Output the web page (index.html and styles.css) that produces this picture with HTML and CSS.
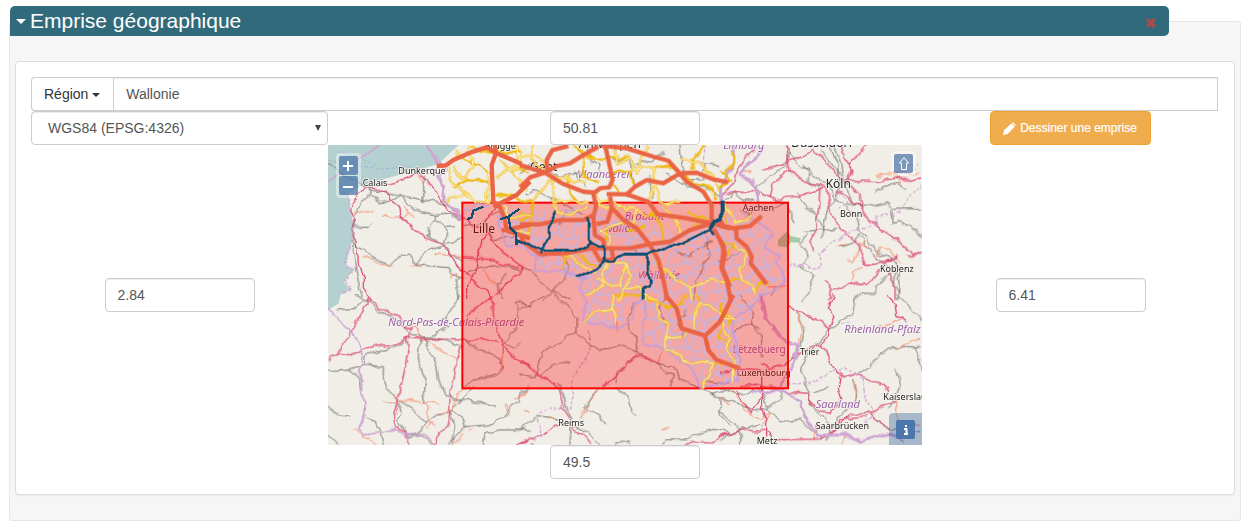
FILE: index.html
```html
<!DOCTYPE html>
<html lang="fr">
<head>
<meta charset="utf-8">
<title>Emprise géographique</title>
<link rel="stylesheet" href="styles.css">
</head>
<body>
<section class="well">
  <header class="legend">
    <button class="toggle" type="button"><span class="caret"></span>Emprise géographique</button>
    <button class="remove" type="button" aria-label="Supprimer">
      <svg viewBox="0 0 12 12" aria-hidden="true"><path d="M3.2 1 6 3.8 8.8 1 11 3.2 8.2 6 11 8.8 8.800 11 6 8.200 3.200 11 1 8.800 3.800 6 1 3.200Z"/></svg>
    </button>
  </header>
  <div class="card">
    <div class="input-group">
      <button class="region" type="button">Région <span class="caret"></span></button>
      <input class="field region-name" type="text" value="Wallonie" aria-label="Région">
    </div>
    <div class="extent">
      <div class="select-wrap">
        <select class="field projection" aria-label="Projection"><option>WGS84 (EPSG:4326)</option></select>
        <svg class="arrow" viewBox="0 0 6 6" aria-hidden="true"><path d="M0 0H6L3 6Z"/></svg>
      </div>
      <input class="field coord" type="text" value="50.81" aria-label="Nord">
      <button class="draw" type="button">
        <svg viewBox="0 0 14 14" aria-hidden="true"><path d="M0 14 1 9 9 1.500 12.500 5 5 13ZM9.700 1Q10.600 0 11.600 1L13 2.400Q14 3.400 13 4.300L12.800 4.500 9.400 1.200Z"/></svg>
        Dessiner une emprise
      </button>
      <input class="field coord" type="text" value="2.84" aria-label="Ouest">
      <div class="map">
        <svg class="tiles" viewBox="0 0 1782 900" preserveAspectRatio="xMidYMid slice" role="img" aria-label="Carte">
          <defs>
            <filter id="winding" filterUnits="userSpaceOnUse" x="0" y="0" width="1782" height="900" color-interpolation-filters="sRGB">
              <feTurbulence type="fractalNoise" baseFrequency="0.03" numOctaves="2" seed="4" result="noise"/>
              <feDisplacementMap in="SourceGraphic" in2="noise" scale="22" xChannelSelector="R" yChannelSelector="G"/>
            </filter>
            <pattern id="communes" width="96" height="84" patternUnits="userSpaceOnUse">
              <path class="commune" d="M0 20 12 14 20 22 34 16 40 4 38 0M34 16 42 30 36 44 22 50 16 62 4 60 0 66M42 30 56 34 64 24 80 28 86 18 96 20M64 24 60 10 66 0M36 44 50 56 48 70 38 84M50 56 66 54 72 44 80 28M66 54 76 66 70 76 66 84M76 66 90 62 96 66M16 62 22 74 14 84M14 0 20 8 20 22M84 84 86 74 90 62"/>
            </pattern>
          </defs>
          <rect class="land" width="1782" height="900"/>
          <path class="sea" d="M0 0H392L330 58 220 88 105 120 62 145 66 195 78 245 72 285 62 325 52 362 78 372 60 395 46 415 72 432 38 448 32 476 0 494Z"/>
          <path class="green" d="M1350 285 1378 258 1388 273 1418 280 1416 293 1390 292 1376 307 1350 304Z"/>

          <g filter="url(#winding)">
          <g class="rail">
            <g transform="translate(-24 -15)">
              <path d="M24 70 60 95 130 140 150 145 143 172 122 185 115 208 97 225 105 280 100 330 110 400 118 445 130 480M150 150 200 158 245 165 262 195 285 210 350 225 390 222 424 240M310 105 312 187M352 225 325 258 327 290 355 305 380 310 425 297M150 165 180 185 210 180 255 170 305 178 345 187 385 195 420 215M95 305 150 345 180 362 205 376 240 350 265 342 280 355 290 373 315 335 380 315 390 345 426 362M290 373 340 379 388 383 394 400 425 410M372 262 410 260M98 245 120 262 140 262 156 250M430 410 408 418 415 440 415 480M345 228 380 280 374 310"/>
              <path d="M440 400 500 380 545 375 600 392M560 400 532 440 545 480M505 280 520 300 560 290 600 288M430 260 490 248 510 225 550 215"/>
            </g>
            <g transform="translate(576 -15)">
              <path d="M0 95 30 75 70 85 120 110 200 92M200 15 210 60 235 70 240 100M280 60 330 55 350 70 400 60 430 40M330 60 340 130 325 170M480 15 485 70 500 120 550 118 555 70 600 80M440 100 500 140 560 145 600 170M10 165 50 150 80 170 120 185M120 185 160 210 190 225M160 95 200 140M390 110 395 180"/>
              <path d="M0 380 40 395 60 425 95 455 130 425 150 380 120 330 60 350M95 455 70 480M95 455 150 480M330 325 375 345M380 360 390 400M560 290 565 350 530 420 520 480M140 210 120 250M460 330 500 350 580 300"/>
            </g>
            <g transform="translate(1176 -15)">
              <path d="M110 180 115 140 150 105 195 80 210 40 200 15M210 40 240 80 270 90 300 125 340 150 345 180 325 200 312 250 310 292M325 15 350 60 360 120 350 180 385 210 410 235 420 270 450 310 480 345 520 355 530 370 540 450 535 480M340 15 365 70 375 140 400 190 430 205M300 30 340 80 365 105M250 75 270 100 260 120 300 140M375 195 450 200 505 185 520 208 605 205M515 210 520 250 545 245 605 290M15 180 50 155 65 180 100 180M230 155 250 200 290 225 310 260M205 205 222 225 222 250M255 275 300 268 350 265M265 280 240 310 265 350 240 375 280 410 275 440 245 480M355 320 400 310 420 280M420 290 465 350 500 375 525 395 520 430 540 460 530 480M410 475 430 460 465 460 485 420 520 395M470 150 530 130 560 150"/>
              <path d="M170 440 150 470M60 330 30 360 0 365M115 190 95 220 60 210M150 205 200 190"/>
            </g>
            <g transform="translate(-24 450)">
              <path d="M105 0 140 15 180 50 220 65 265 110 300 125 350 130 420 150M50 45 105 40 135 15M300 130 340 120 380 95 382 60 412 15 415 0M310 130 330 165 350 210 355 250 375 305 420 315 480 320 530 335M300 130 300 160 290 205 317 250 310 325M265 130 230 155 160 170 140 180 135 210 85 222 24 228M130 210 190 215 190 250 200 280 235 315 240 350 232 370 270 430 M240 315 280 350 320 380 310 405 270 430M320 380 350 360 390 350 430 310 460 275M390 350 400 390 400 450M395 350 430 370 435 395 385 450M435 395 500 390 530 380 560 360 570 335 600 320 605 290 630 280M490 450 495 415 540 405 630 405M24 335 60 360 90 364M24 418 55 450M135 370 170 380 190 450M265 420 300 420 340 450M85 222 120 250 125 285"/>
              <path d="M425 135 490 170 540 190 550 215 535 240 460 255 430 275M545 190 550 140 590 100 595 40 580 20 630 30M550 140 580 165 605 140"/>
            </g>
            <g transform="translate(576 450)">
              <path d="M0 410 25 380 50 365 90 370 115 375 150 385 200 410 240 450M110 260 130 300 140 340 155 370 150 450M290 280 325 295 335 350 348 362M195 340 240 360 257 388M230 285 190 340M545 280 600 310 600 360 630 390M570 300 630 285M430 450 440 430 500 435 520 420 580 403 630 410M285 450 290 440 330 445"/>
              <path d="M0 40 75 0M100 0 150 40 168 70 168 110 210 150 240 165 300 153 345 170 410 205 440 235 460 240 458 275M168 110 120 145 90 155 60 190 45 245 0 240M60 240 100 210 120 200 150 198M345 170 355 130 325 100 325 70 345 25M345 180 290 235 285 270M410 205 465 215 480 250 515 270 540 270M490 125 480 80 500 40M630 260 590 262 560 255M440 0 420 40 440 110"/>
            </g>
            <g transform="translate(1176 450)">
              <path d="M410 0 400 60 345 90 325 100 300 140 270 165 250 195 245 230 260 260 265 310 290 350 330 390M530 0 545 10 570 40 605 80M420 235 450 215 480 180 520 155 605 155M585 155 600 200 605 230M525 220 540 270 520 320 500 345M400 250 410 290 400 330 370 350 330 400 325 440M150 285 180 290 190 310 140 335 125 290 100 270M135 340 180 380 240 375 290 420M0 310 60 330 105 345 140 340M0 350 60 400 60 450M0 280 50 300 100 290M470 380 500 400 605 410M280 295 325 275M0 440 40 410 120 390M230 50 250 100 240 160 220 190"/>
              <path d="M60 0 100 50 95 90 125 120 125 190M40 110 80 85 120 100"/>
            </g>
          </g>

          <g class="minor">
            <g transform="translate(-24 -15)"><path d="M95 219 125 215 160 215M190 228 250 230 265 212 282 228M250 203 268 215M128 350 160 358 180 372 218 378M278 376 310 380M345 341 425 352M392 415 395 400 410 395 410 410M290 105 310 130M490 390 510 415 530 440"/></g>
            <g transform="translate(1176 -15)"><path d="M470 110 530 100 600 100M520 95 540 135M60 95 95 100M430 305 400 370 380 355M430 380 400 400 400 430M140 440 200 440M545 370 520 345 480 320 470 355M350 320 375 310M430 310 455 330"/></g>
            <g transform="translate(-24 450)"><path d="M265 95 290 98 300 125 410 192M190 315 200 328 230 322M220 298 240 315 300 320 355 328M315 325 325 370 345 395M325 400 335 380M105 400 135 425 170 450M360 355 400 345 420 290 450 275M548 140 545 220M580 315 610 300 630 270M555 330 565 355M445 410 455 400M400 450 430 415M610 350 630 348"/></g>
            <g transform="translate(576 450)"><path d="M240 275 205 325 180 370M0 300 20 290M290 80 290 105M410 205 425 170M10 350 30 350M85 365 105 375M425 405 450 400"/></g>
            <g transform="translate(1176 450)"><path d="M230 55 245 90 235 150M475 95 520 80 550 70M535 158 570 140 605 130M405 260 405 310M30 280 65 320 75 350 120 370 150 350 125 400M530 320 530 380 600 390M375 420 370 450M0 310 30 330M280 410 285 435"/></g>
          </g>

          <g class="trunk">
            <g transform="translate(-24 -15)"><path d="M145 138 120 160 100 195 92 222 103 245 100 280 112 310 115 370 130 410 130 440 155 480M150 140 180 150 205 165 215 185 235 205 240 225 280 265 325 296 375 315 390 345 415 382 435 395 470 430 500 450 510 475M155 138 185 128 210 133 250 122 260 110 290 103 320 122 350 160 380 210 425 235 450 255 490 262M500 280 470 340 465 400 440 430 440 480M430 350 510 355 545 370 600 385M500 280 540 330 605 380 610 390 560 430 505 480M490 260 510 220 530 200"/></g>
            <g transform="translate(1176 -15)"><path d="M0 170 40 130 50 90 80 50 110 20M20 160 105 155 170 180 250 165 310 145M130 90 190 70 205 60 260 45 275 25 330 80 365 120 470 125 520 115 605 118M205 60 210 90 240 120 300 135 330 160 325 200 350 250 380 285 420 315 435 370M150 175 160 130 210 90M390 100 390 70 440 15M375 120 420 165 430 220 470 260 530 300 580 340 605 342M350 150 400 190 425 200M535 345 500 370 470 400 450 430 390 430 335 455M430 370 480 370 535 350M600 342 560 345M315 420 335 455 325 480M500 395 525 440 525 480M390 80 385 120M300 150 295 210 280 290 270 310 280 335M365 15 380 60 395 90M200 15 205 60"/></g>
            <g transform="translate(-24 450)"><path d="M145 10 140 30 105 90 70 145 55 175 24 195M145 10 180 40 240 65 250 95 275 100 260 135 265 155 255 220 235 310 220 360 225 390 255 410 270 450M55 175 95 180 130 160 190 150 230 150 262 125 300 130 420 135 440 140 480 135 530 135M440 60 510 10M510 0 520 30 520 60 535 110 545 150 580 185 630 215M425 150 410 190 405 240 390 290 388 380 360 410 340 450M590 450 630 436"/></g>
            <g transform="translate(576 450)"><path d="M0 202 30 215 65 250 100 262 120 290 130 340 150 370 160 400 190 420 215 450M0 445 70 420 100 395 140 385M250 280 290 240 345 180 390 190 420 205M495 450 520 440 570 440 630 415"/></g>
            <g transform="translate(1176 450)"><path d="M205 25 240 55 290 70 330 95 345 65 325 35 340 0M495 0 525 30 530 60 560 80M330 95 325 125 300 150 270 155 210 195 195 210 150 220 120 205M300 150 325 180 350 230 370 245 410 235 440 250 485 270 505 290M360 245 355 280 365 310 330 355 300 350 265 310 260 295 205 290 125 270 60 275M0 235 60 220 125 225M125 230 125 340 140 380 140 430M125 300 95 355 50 290M0 425 60 405 150 410 155 435 310 432 340 410 390 360 450 355 500 325 530 320M450 355 470 380 510 400M310 430 350 400 360 375 440 365M310 430 285 410 290 385"/></g>
          </g>

          <g class="frontier">
            <path d="M0 490 40 530 60 548 95 600 105 640 92 680 105 710 95 740 113 770 110 810 92 850 110 870 160 862 205 852 240 870 290 868 320 900"/>
            <path class="thick" d="M296 0 351 75 331 95 351 130 346 165 371 185 401 220M1218 0 1212 60 1180 130 1182 180M1310 10 1255 60 1235 90 1275 110 1290 140 1286 175M1298 450 1310 510 1336 555 1380 590 1410 600 1400 650 1370 700 1360 735 1270 745M1360 735 1420 770 1430 820 1470 870 1560 870 1600 890 1650 875 1690 865 1730 890"/>
            <path class="dashed" d="M1380 365 1430 355 1450 372 1480 370 1475 325 1510 295 1545 270 1600 250 1640 240 1640 215 1710 205 1740 165 1782 120M1380 715 1450 715 1510 680 1545 672 1600 690 1615 770 1640 800 1610 840M1130 0 1120 60M784 560 785 620 760 660 735 700 730 790 670 785 625 810 640 870 610 900M62 145 66 195 78 245 72 285 62 325 52 362 78 372 60 395 46 415 72 432 38 448"/>
          </g>
          </g>
          <path class="frontier" d="M0 110 90 44 156 0"/>
          <path class="ferry" d="M0 45 70 60 160 72 250 65M30 20 90 35 150 65M1540 140 1560 175 1530 190M1770 55 1760 80M1540 535 1570 530"/>

          <g class="labels">
            <text x="211" y="87" class="town">Dunkerque</text>
            <text x="104" y="123" class="town">Calais</text>
            <text x="434" y="264" class="city">Lille</text>
            <text x="470" y="13" class="town">Brugge</text>
            <text x="606" y="78" class="city">Gent</text>
            <text x="752" y="8" class="city">Antwerpen</text>
            <text x="1390" y="7" class="city">Düsseldorf</text>
            <text x="1493" y="130" class="city">Köln</text>
            <text x="1536" y="215" class="town">Bonn</text>
            <text x="1244" y="197" class="town">Aachen</text>
            <text x="1656" y="380" class="town">Koblenz</text>
            <text x="691" y="843" class="town">Reims</text>
            <text x="1226" y="694" class="town">Luxembourg</text>
            <text x="1416" y="631" class="town">Trier</text>
            <text x="1463" y="852" class="town">Saarbrücken</text>
            <text x="1666" y="764" class="town">Kaiserslautern</text>
            <text x="1286" y="898" class="town">Metz</text>
            <text x="748" y="100" class="area">Vlaanderen</text>
            <text x="1186" y="12" class="area">Limburg</text>
            <text x="181" y="542" class="area">Nord-Pas-de-Calais-Picardie</text>
            <text x="890" y="226" class="area">Brabant</text>
            <text x="830" y="260" class="area">wallon</text>
            <text x="930" y="402" class="area">Wallonie</text>
            <text x="1214" y="625" class="area upright">Lëtzebuerg</text>
            <text x="1549" y="565" class="area">Rheinland-Pfalz</text>
            <text x="1463" y="790" class="area">Saarland</text>
          </g>

          <rect class="extent-box" x="403" y="173" width="977" height="557"/>

          <g filter="url(#winding)">
          <path fill="url(#communes)" d="M520 190 600 200 760 185 900 215 1050 260 1150 240 1230 205 1290 240 1330 270 1320 340 1366 375 1360 420 1290 460 1270 510 1216 545 1240 600 1230 710 1120 725 1080 650 1010 610 955 600 945 510 925 450 880 540 770 530 755 400 650 385 610 320 540 300Z"/>
          <path class="commune edge" d="M410 195 435 185 445 175 465 185 480 175M520 190 515 230 535 300 560 305 590 300 612 330 630 330 625 375 660 385 700 372 745 390 770 400 755 430 775 470 760 525 800 535 880 545 915 525 920 480 945 460 955 510 940 545 950 600 1010 610 1060 650 1090 660 1100 690 1120 728 1180 710 1230 705 1235 640 1220 580 1210 530 1240 500 1275 490 1300 450 1345 435 1370 410 1365 380 1345 350 1360 330 1310 310 1335 270 1295 235 1270 215 1240 205"/>

          <g class="road">
            <g transform="translate(-24 -15)"><path d="M405 35 430 50 452 18M385 80 390 118 430 155 470 185M380 183 400 165 435 165 480 188 505 185 515 165M450 45 460 85 430 120 400 80M505 95 503 185M455 20 500 35 560 45 600 30M590 15 598 80 560 90 530 110M598 80 630 95M410 50 470 72 510 100M540 60 580 100 620 150M530 170 570 165 600 180M550 195 570 240 610 222 630 235M580 275 630 280M400 140 440 120 500 125"/></g>
            <g transform="translate(576 -15)"><path d="M0 45 50 50 90 80M40 15 35 60 70 90M95 100 100 185 150 180 200 190M0 180 40 185 35 230 0 240M40 180 100 110 200 130M100 190 110 215 150 225 200 200M160 15 200 50 250 60 330 50M280 15 295 70 330 50 350 100 380 15M270 100 330 95 340 140M330 90 400 80 405 130 380 190M400 80 460 80 520 130M405 130 420 190 480 185M480 60 540 70 570 100 600 150M550 15 520 60 520 90M500 130 570 145 590 180M140 110 150 160 180 190M190 50 190 110 230 130M280 130 300 160M230 155 240 200 280 215 300 190M230 180 270 185 320 210 340 200 380 230 400 215M350 200 345 240 310 250 240 270M240 270 270 290 265 320M265 260 250 310M100 330 160 350 190 380 230 400M140 330 130 390M270 360 320 370 330 410 310 460 290 480M320 370 300 440 230 420M400 350 440 400 510 440 515 480M430 200 480 260 480 285M390 220 430 260 425 310M500 220 560 240M510 440 570 420 630 425M260 370 245 440 200 465M180 340 200 370 240 380M320 270 370 260M520 270 540 240M300 450 360 440 375 480M0 210 30 240 25 300"/></g>
            <g transform="translate(1176 -15)"><path d="M15 100 40 65 35 35M0 140 30 120 5 90M10 190 40 240M40 250 80 240 100 220M5 210 20 250M0 310 40 310 50 330 80 335 75 370 60 380 65 420 100 435 105 465M40 310 20 350M60 420 0 425M105 465 120 430 150 430"/></g>
            <g transform="translate(576 450)"><path d="M280 0 285 85M190 82 225 50 280 45M280 0 370 5M370 0 410 20 415 60 440 90 440 165M375 10 440 35 470 30 500 0M440 165 480 180 490 200 580 205M440 130 490 125 520 100 525 50 545 25 630 65M545 25 530 0M580 205 545 280M580 205 630 205M610 20 600 130 630 150M620 50 630 90"/></g>
            <g transform="translate(1176 450)"><path d="M45 75 10 70 10 105 25 125 20 160 40 200 40 260"/></g>
          </g>
          <g class="road-core">
            <g transform="translate(-24 -15)"><path d="M405 35 430 50 452 18M385 80 390 118 430 155 470 185M380 183 400 165 435 165 480 188 505 185 515 165M450 45 460 85 430 120 400 80M505 95 503 185M590 15 598 80 560 90 530 110M540 60 580 100 620 150M550 195 570 240 610 222 630 235M580 275 630 280"/></g>
            <g transform="translate(576 -15)"><path d="M0 45 50 50 90 80M40 15 35 60 70 90M95 100 100 185 150 180 200 190M40 180 100 110 200 130M100 190 110 215 150 225 200 200M280 15 295 70 330 50 350 100 380 15M330 90 400 80 405 130 380 190M405 130 420 190 480 185M480 60 540 70 570 100 600 150M230 155 240 200 280 215 300 190M230 180 270 185 320 210 340 200 380 230M350 200 345 240 310 250 240 270 270 290 265 320M100 330 160 350 190 380 230 400M270 360 320 370 330 410 310 460 290 480M320 370 300 440 230 420M400 350 440 400 510 440 515 480M510 440 570 420 630 425M260 370 245 440 200 465M430 200 480 260 480 285M300 450 360 440 375 480"/></g>
            <g transform="translate(1176 -15)"><path d="M10 190 40 240M40 250 80 240 100 220M40 310 50 330 80 335 75 370 60 380 65 420 100 435 105 465"/></g>
            <g transform="translate(576 450)"><path d="M280 0 285 85M190 82 225 50 280 45M370 0 410 20 415 60 440 90 440 165 480 180 490 200 580 205 545 280M440 130 490 125 520 100 525 50 545 25 630 65"/></g>
            <g transform="translate(1176 450)"><path d="M45 75 10 70 10 105 25 125 20 160 40 200 40 260"/></g>
          </g>
          </g>

          <g class="motorway">
            <g transform="translate(-24 -15)"><path d="M350 78 378 76 400 60 450 38 500 22 530 40 605 72M525 15 527 42 515 75 520 185 540 200 555 240 560 272M630 125 590 165 520 200M545 272 630 255M560 272 600 285 612 300M600 285 630 295"/></g>
            <g transform="translate(576 -15)"><path d="M0 75 75 98 110 78 150 70 190 45 235 20M75 98 30 112 0 142M75 98 130 132 190 155 225 158M82 95 80 60 97 30 145 18M255 15 265 60 278 118 268 142 240 145 220 160 228 200 220 230 225 285 250 300 255 330M270 165 275 205 262 245 230 252M245 17 320 25 400 50 445 62 475 95 500 125 550 155 575 195 575 245M260 162 320 163 345 140 380 120 430 130 480 100 530 98 580 118 625 127M320 163 385 185 412 222 500 235 575 250 630 265M0 253 60 253 120 240 190 240 220 225M275 203 310 240 350 265 390 315 415 360 430 420 442 480M0 298 60 342 140 340 215 325 330 325 390 312 450 305 510 270 575 250M210 310 240 362 280 358 275 330M580 265 612 320 605 380 630 440"/></g>
            <g transform="translate(1176 -15)"><path d="M0 240 10 258 40 265 90 258 125 228M48 265 50 295 80 320 95 350 92 370 140 432M0 300 15 340 5 385 20 420 32 480"/></g>
            <g transform="translate(576 450)"><path d="M436 0 470 40 485 100 555 122 600 80 640 0M555 122 565 165 590 195 660 220"/></g>
          </g>
          <g class="canal">
            <g transform="translate(-24 -15)"><path d="M442 238 455 232 460 212 490 200M540 238 565 230 598 207M565 230 572 265 588 280 590 315M590 302 606 308"/></g>
            <g transform="translate(576 -15)"><path d="M0 306 25 312 40 320 60 325 75 332 130 330 160 332 200 323 212 308 238 320 250 318 255 330 252 362 280 366 290 352 315 342 380 342 395 334 430 328 460 315 490 310 510 298 545 280 570 270 582 285M105 212 98 240 85 265 90 290 72 315 62 340M200 232 208 250 205 295 212 308M168 408 210 398 232 388 252 362M378 340 385 365 382 400 395 425 388 440 370 442 368 480"/><path class="wide" d="M570 268 582 245 598 240 607 215 607 182"/></g>
            <g transform="translate(576 450)"><path d="M372 0 368 14"/></g>
          </g>
        </svg>
        <div class="zoom">
          <button class="ol" type="button" aria-label="Zoom avant"><svg viewBox="0 0 19 19"><path d="M4 10H14M9 5V15"/></svg></button>
          <button class="ol" type="button" aria-label="Zoom arrière"><svg viewBox="0 0 19 19"><path d="M4 11H14"/></svg></button>
        </div>
        <div class="rotate">
          <button class="ol" type="button" aria-label="Nord en haut"><svg viewBox="0 0 19 19"><path class="thin" d="M10 3.500 14.500 9H12.500V15.500H7.500V9H5.500Z"/></svg></button>
        </div>
        <div class="info">
          <button class="ol solid" type="button" aria-label="Attributions"><svg viewBox="0 0 19 19"><path d="M8 9H10.500V14M8 14H12M9 6H11"/></svg></button>
        </div>
      </div>
      <input class="field coord" type="text" value="6.41" aria-label="Est">
      <input class="field coord south" type="text" value="49.5" aria-label="Sud">
    </div>
  </div>
</section>
</body>
</html>
```

FILE: styles.css
```css
* { box-sizing: border-box; }

body {
  margin: 0;
  padding: 21px 6px 7px 9px;
  background: #fff;
  color: #333;
  font: 14px/20px "Liberation Sans", Arial, sans-serif;
}

button, input, select { font: inherit; margin: 0; }
button { cursor: pointer; }

.well {
  padding: 0 5px 25px;
  background: #f6f6f6;
  border: 1px solid #e6e6e6;
  border-radius: 3px;
}

.legend {
  display: flex;
  align-items: center;
  justify-content: space-between;
  height: 30px;
  margin: -16px 66px 25px -5px;
  padding: 0 12px 0 6px;
  background: #316b7b;
  border-radius: 5px 5px 5px 0;
}

.toggle {
  display: flex;
  align-items: center;
  gap: 4px;
  padding: 0;
  border: 0;
  background: none;
  color: #fff;
  font-size: 21px;
  line-height: 30px;
}

.caret {
  display: inline-block;
  border: 4px solid transparent;
  border-top-color: currentColor;
  border-bottom: 0;
  vertical-align: middle;
}
.toggle .caret { border-width: 5px 5px 0; }

.remove { display: flex; padding: 4px 0 0; border: 0; background: none; }
.remove svg { width: 12px; height: 12px; fill: #b14a48; }

.card {
  padding: 15px;
  background: #fff;
  border: 1px solid #ddd;
  border-radius: 4px;
  box-shadow: 0 1px 1px rgba(0, 0, 0, .05);
}

.input-group { display: flex; }

.region {
  height: 34px;
  padding: 0 13px 0 12px;
  background: #fff;
  border: 1px solid #ccc;
  border-right: 0;
  border-radius: 4px 0 0 4px;
  color: #333;
}

.field {
  height: 34px;
  padding: 6px 12px;
  background: #fff;
  border: 1px solid #ccc;
  border-radius: 4px;
  box-shadow: inset 0 1px 1px rgba(0, 0, 0, .075);
  color: #555;
}
.region-name { flex: 1; min-width: 0; margin-right: 1px; border-radius: 0; }

.extent {
  display: grid;
  grid-template-columns: 1fr 2fr 1fr;
  align-items: center;
  justify-items: center;
}

.select-wrap { position: relative; width: 100%; }
.projection { display: block; width: 100%; padding: 6px 16px; appearance: none; }
.arrow { position: absolute; top: 14px; right: 7px; width: 6px; height: 6px; fill: #444; }

.coord { width: 150px; }
.south { grid-column: 2; }

.draw {
  display: flex;
  align-items: center;
  gap: 4px;
  height: 34px;
  padding: 0 13px 0 12px;
  background: #f0ad4e;
  border: 1px solid #eea236;
  border-radius: 4px;
  color: #fff;
  font-size: 12px;
  -webkit-text-stroke: 0.2px #fff;
}
.draw svg { width: 13px; height: 13px; fill: #fff; }

.map { position: relative; width: 100%; height: 300px; overflow: hidden; }
.tiles { display: block; width: 100%; height: 100%; }
.tiles path { stroke-linejoin: round; }

.land { fill: #f1eee8; }
.sea { fill: #b5d0d0; }
.green { fill: #a5cba5; }
.rail { fill: none; stroke: #727271; stroke-width: 3; }
.minor { fill: none; stroke: #f58a66; stroke-width: 3; }
.trunk { fill: none; stroke: #dc5078; stroke-width: 4; }
.frontier { fill: none; stroke: #cfa5d2; stroke-width: 5; }
.frontier .thick { stroke-width: 9; }
.frontier .dashed { stroke-dasharray: 10 6; stroke-width: 4; }
.ferry { fill: none; stroke: #8fa9dd; stroke-width: 2; stroke-dasharray: 9 7; }

.labels {
  font-family: "Noto Sans", sans-serif;
  fill: #222;
  stroke: #f7f5f1;
  stroke-width: 5;
  stroke-linejoin: round;
  paint-order: stroke;
}
.town { font-size: 27px; }
.city { font-size: 36px; }
.area { font-size: 33px; font-style: italic; fill: #9b5fa5; }
.area.upright { font-style: normal; font-size: 30px; }

.extent-box { fill: rgba(255, 0, 0, .3); stroke: #f00; stroke-width: 6; }
.commune { fill: none; stroke: #bdb5ea; stroke-width: 4; }
.commune.edge { stroke: #c39bdc; stroke-width: 5; }
.road { fill: none; stroke: #f0b810; stroke-width: 7; }
.road-core { fill: none; stroke: #fffcdc; stroke-width: 3; }
.motorway { fill: none; stroke: #ea6344; stroke-width: 13; }
.canal { fill: none; stroke: #0d4f73; stroke-width: 7; shape-rendering: crispEdges; }
.canal .wide { stroke-width: 11; }

.zoom, .rotate, .info { position: absolute; display: grid; gap: 1px; padding: 3px; border-radius: 4px; background: rgba(255, 255, 255, .4); }
.zoom { top: 8px; left: 8px; }
.rotate { top: 6px; right: 6px; }
.info { right: 0; bottom: 0; padding: 7px 7px 6px; border-radius: 4px 0 0; background: rgba(0, 60, 136, .3); }

.ol {
  display: block;
  width: 19px;
  height: 19px;
  padding: 0;
  border: 0;
  border-radius: 2px;
  background: rgba(0, 60, 136, .5);
}
.ol.solid { background: #4b77ac; }
.ol svg { display: block; width: 19px; height: 19px; fill: none; stroke: #fff; stroke-width: 2; }
.ol .thin { stroke-width: 1; }
```
